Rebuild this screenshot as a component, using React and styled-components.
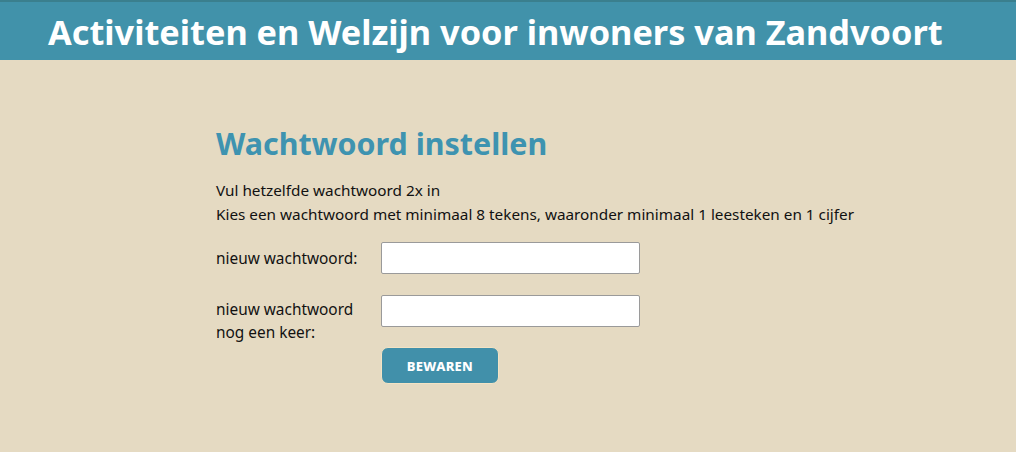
import React from "react";
import styled, { createGlobalStyle } from "styled-components";

const Global = createGlobalStyle`
  html, body { margin: 0; padding: 0; }
  body {
    background: #e5dac2;
    font-family: "Noto Sans", sans-serif;
    color: #111;
  }
`;

const Header = styled.header`
  height: 60px;
  background: #4192aa;
  border-top: 2px solid #3a7f8e;
  box-sizing: border-box;
  display: flex;
  align-items: center;
  padding-left: 48px;
`;

const SiteTitle = styled.h1`
  margin: 0;
  color: #fff;
  font-size: 34.3px;
  font-weight: 700;
  white-space: nowrap;
`;

const Main = styled.main`
  margin-left: 216px;
  padding-top: 66px;
`;

const Title = styled.h2`
  margin: 0 0 16px;
  color: #3e93b0;
  font-size: 30.4px;
  font-weight: 700;
  line-height: 36px;
`;

const Intro = styled.p`
  margin: 0;
  font-size: 15.3px;
  line-height: 24px;
  white-space: nowrap;
`;

const Form = styled.form`
  margin-top: 16px;
  display: grid;
  grid-template-columns: 165px 259px;
  row-gap: 21px;
  align-items: start;
`;

const Label = styled.label`
  font-size: 15.4px;
  line-height: 23px;
  padding-top: ${(p) => p.$pt || 5}px;
`;

const Input = styled.input`
  box-sizing: border-box;
  width: 259px;
  height: 32px;
  border: 1px solid #9a9a9a;
  border-radius: 2px;
  background: #fff;
  margin: 0;
`;

const Button = styled.button`
  grid-column: 2;
  justify-self: start;
  margin-top: -18px;
  width: 118px;
  height: 37px;
  box-sizing: border-box;
  background: #4190aa;
  color: #fff;
  border: 1px solid #f3e3c4;
  border-radius: 7px;
  font-family: inherit;
  font-weight: 800;
  font-size: 13px;
  letter-spacing: 0.3px;
  text-transform: uppercase;
`;

export default function App() {
  return (
    <>
      <Global />
      <Header>
        <SiteTitle>Activiteiten en Welzijn voor inwoners van Zandvoort</SiteTitle>
      </Header>
      <Main>
        <Title>Wachtwoord instellen</Title>
        <Intro>Vul hetzelfde wachtwoord 2x in</Intro>
        <Intro>
          Kies een wachtwoord met minimaal 8 tekens, waaronder minimaal 1 leesteken en 1 cijfer
        </Intro>
        <Form onSubmit={(e) => e.preventDefault()}>
          <Label htmlFor="pw1">nieuw wachtwoord:</Label>
          <Input id="pw1" type="password" />
          <Label htmlFor="pw2" $pt={3}>
            nieuw wachtwoord
            <br />
            nog een keer:
          </Label>
          <Input id="pw2" type="password" />
          <Button type="submit">Bewaren</Button>
        </Form>
      </Main>
    </>
  );
}
